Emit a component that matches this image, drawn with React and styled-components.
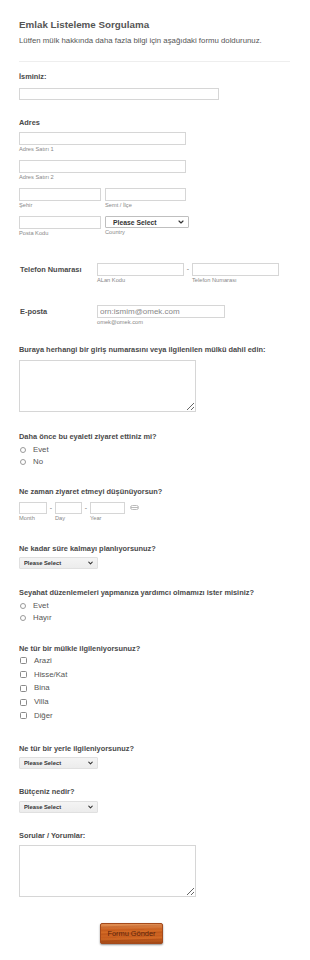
import styled, { createGlobalStyle } from "styled-components";
import { ChevronDown } from "lucide-react";

const GlobalStyle = createGlobalStyle`
    body {
        margin: 0;
        background: #fff;
        font-family: "Liberation Sans", Arial, sans-serif;
    }
`;

const Form = styled.form`
    width: 310px;
    box-sizing: border-box;
    padding: 19px 19px 16px;
    color: #555;
    font-size: 7px;
    line-height: 1;
    display: flex;
    flex-direction: column;
`;

const Title = styled.h1`
    margin: 0;
    font-size: 9.8px;
    line-height: 12px;
    font-weight: bold;
    color: #555;
`;

const Subtitle = styled.p`
    margin: 5px 0 0;
    font-size: 7.8px;
    line-height: 10px;
    color: #555;
`;

const Divider = styled.hr`
    margin: 15px 0 0;
    width: 271px;
    border: 0;
    border-top: 1px solid #eee;
`;

const Field = styled.div`
    margin-top: ${(p) => p.$top}px;
    display: flex;
    flex-direction: column;
    align-items: flex-start;
`;

const Label = styled.label`
    display: block;
    font-size: 7.4px;
    line-height: 10px;
    font-weight: bold;
    color: #4a4a4a;
    margin-bottom: ${(p) => p.$mb ?? 4}px;
    white-space: nowrap;
`;

const TextInput = styled.input`
    display: block;
    box-sizing: border-box;
    width: ${(p) => p.$w}px;
    height: ${(p) => p.$h ?? 13}px;
    margin: 0;
    padding: 0 2px;
    border: 1px solid #d6d6d6;
    background: #fff;
    font-family: "Liberation Sans", Arial, sans-serif;
    font-size: 8px;
    color: #555;

    &::placeholder {
        color: #888;
    }
`;

const SubLabel = styled.span`
    display: block;
    margin-top: 1px;
    font-size: 5.7px;
    line-height: 7px;
    color: #888;
    white-space: nowrap;
`;

const AddressGrid = styled.div`
    display: grid;
    grid-template-columns: 82px 84px;
    column-gap: 4px;
    row-gap: 7px;
`;

const Wide = styled.div`
    grid-column: 1 / span 2;
`;

const InlineField = styled.div`
    margin-top: ${(p) => p.$top}px;
    display: grid;
    grid-template-columns: 78px auto;
    align-items: start;
`;

const InlineLabel = styled.label`
    padding-left: 1px;
    font-size: 7.4px;
    line-height: 13px;
    font-weight: bold;
    color: #4a4a4a;
`;

const PhoneRow = styled.div`
    display: flex;
    align-items: flex-start;
    gap: 2px;
`;

const Dash = styled.span`
    font-size: 7px;
    line-height: 11px;
    color: #777;
    width: 4px;
    text-align: center;
`;

const TextArea = styled.textarea`
    display: block;
    box-sizing: border-box;
    width: 177px;
    height: 52px;
    margin: 0;
    border: 1px solid #d6d6d6;
    resize: both;
`;

const OptionRow = styled.label`
    display: flex;
    align-items: center;
    gap: 7px;
    height: ${(p) => p.$h}px;
    padding-left: 1px;
    font-size: 7.8px;
    color: #555;
`;

const RadioDot = styled.span`
    box-sizing: border-box;
    width: 6px;
    height: 6px;
    border: 1px solid #9a9a9a;
    border-radius: 50%;
    background: #fff;
`;

const CheckBox = styled.span`
    box-sizing: border-box;
    width: 7px;
    height: 7px;
    border: 1px solid #8a8a8a;
    border-radius: 1.5px;
    background: #fff;
`;

const DateRow = styled.div`
    display: flex;
    align-items: flex-start;
    gap: 2px;
`;

const CalendarIcon = styled.span`
    margin: 3px 0 0 3px;
    box-sizing: border-box;
    width: 9px;
    height: 5px;
    border: 1px solid #bbb;
    border-radius: 3px;
    background: linear-gradient(#bbb, #bbb) center / 100% 1px no-repeat;
`;

const SelectWrap = styled.div`
    position: relative;
    width: ${(p) => p.$w}px;
    height: ${(p) => p.$h}px;
`;

const Select = styled.select`
    display: block;
    box-sizing: border-box;
    appearance: none;
    width: 100%;
    height: 100%;
    margin: 0;
    padding: 0 0 0 ${(p) => (p.$plain ? 7 : 4)}px;
    border: 1px solid ${(p) => (p.$plain ? "#bfbfbf" : "#e0e0e0")};
    border-radius: 1px;
    background: ${(p) => (p.$plain ? "#fff" : "linear-gradient(#f4f4f4, #ececec)")};
    font-family: "Liberation Sans", Arial, sans-serif;
    font-size: ${(p) => (p.$plain ? 6.8 : 5.8)}px;
    font-weight: bold;
    color: #333;
`;

const Chevron = styled(ChevronDown)`
    position: absolute;
    right: 4px;
    top: 50%;
    transform: translateY(-50%);
    pointer-events: none;
    color: #333;
`;

const ButtonRow = styled.div`
    margin-top: 26px;
    padding-left: 81px;
`;

const SubmitButton = styled.button`
    display: block;
    width: 63px;
    height: 21px;
    padding: 0;
    border: 1px solid #a44a1c;
    border-radius: 2px;
    font-family: "Liberation Sans", Arial, sans-serif;
    font-size: 7.4px;
    color: #5a240c;
    background:
        linear-gradient(rgba(255, 220, 180, 0.35), rgba(255, 255, 255, 0) 30%, rgba(0, 0, 0, 0) 75%, rgba(90, 30, 5, 0.35)),
        repeating-linear-gradient(178deg, #c9601f 0px, #d66d27 2px, #bd5519 3px, #cf6523 5px, #c45b1d 7px),
        #c9601f;
    box-shadow: 0 1px 2px rgba(0, 0, 0, 0.45);
`;

const Choice = ({ type, label, h }) => (
    <OptionRow $h={h}>
        {type === "radio" ? <RadioDot /> : <CheckBox />}
        {label}
    </OptionRow>
);

const Dropdown = ({ w, h, plain }) => (
    <SelectWrap $w={w} $h={h}>
        <Select $plain={plain} defaultValue="">
            <option value="">Please Select</option>
        </Select>
        <Chevron size={plain ? 8 : 7} strokeWidth={3.5} />
    </SelectWrap>
);

const AddressPart = ({ w, label }) => (
    <div>
        <TextInput $w={w} />
        <SubLabel>{label}</SubLabel>
    </div>
);

const App = () => {
    const properties = ["Arazi", "Hisse/Kat", "Bina", "Villa", "Diğer"];
    return (
        <>
            <GlobalStyle />
            <Form>
                <Title>Emlak Listeleme Sorgulama</Title>
                <Subtitle>Lütfen mülk hakkında daha fazla bilgi için aşağıdaki formu doldurunuz.</Subtitle>
                <Divider />

                <Field $top={10}>
                    <Label $mb={6}>İsminiz:</Label>
                    <TextInput $w={200} $h={12} />
                </Field>

                <Field $top={18}>
                    <Label>Adres</Label>
                    <AddressGrid>
                        <Wide><AddressPart w={167} label="Adres Satırı 1" /></Wide>
                        <Wide><AddressPart w={167} label="Adres Satırı 2" /></Wide>
                        <AddressPart w={82} label="Şehir" />
                        <AddressPart w={81} label="Semt / İlçe" />
                        <AddressPart w={82} label="Posta Kodu" />
                        <div>
                            <Dropdown w={84} h={12} plain />
                            <SubLabel>Country</SubLabel>
                        </div>
                    </AddressGrid>
                </Field>

                <InlineField $top={26}>
                    <InlineLabel>Telefon Numarası</InlineLabel>
                    <PhoneRow>
                        <div>
                            <TextInput $w={87} />
                            <SubLabel>ALan Kodu</SubLabel>
                        </div>
                        <Dash>-</Dash>
                        <div>
                            <TextInput $w={87} />
                            <SubLabel>Telefon Numarası</SubLabel>
                        </div>
                    </PhoneRow>
                </InlineField>

                <InlineField $top={21}>
                    <InlineLabel>E-posta</InlineLabel>
                    <div>
                        <TextInput $w={128} placeholder="orn:ismim@omek.com" />
                        <SubLabel>omek@omek.com</SubLabel>
                    </div>
                </InlineField>

                <Field $top={19}>
                    <Label $mb={5}>Buraya herhangi bir giriş numarasını veya ilgilenilen mülkü dahil edin:</Label>
                    <TextArea />
                </Field>

                <Field $top={20}>
                    <Label $mb={2}>Daha önce bu eyaleti ziyaret ettiniz mi?</Label>
                    <Choice type="radio" label="Evet" h={12} />
                    <Choice type="radio" label="No" h={12} />
                </Field>

                <Field $top={19}>
                    <Label $mb={5}>Ne zaman ziyaret etmeyi düşünüyorsun?</Label>
                    <DateRow>
                        <div>
                            <TextInput $w={28} $h={12} />
                            <SubLabel>Month</SubLabel>
                        </div>
                        <Dash>-</Dash>
                        <div>
                            <TextInput $w={27} $h={12} />
                            <SubLabel>Day</SubLabel>
                        </div>
                        <Dash>-</Dash>
                        <div>
                            <TextInput $w={35} $h={12} />
                            <SubLabel>Year</SubLabel>
                        </div>
                        <CalendarIcon />
                    </DateRow>
                </Field>

                <Field $top={22}>
                    <Label $mb={3}>Ne kadar süre kalmayı planlıyorsunuz?</Label>
                    <Dropdown w={79} h={12} />
                </Field>

                <Field $top={19}>
                    <Label $mb={2}>Seyahat düzenlemeleri yapmanıza yardımcı olmamızı ister misiniz?</Label>
                    <Choice type="radio" label="Evet" h={12} />
                    <Choice type="radio" label="Hayır" h={12} />
                </Field>

                <Field $top={20}>
                    <Label $mb={0}>Ne tür bir mülkle ilgileniyorsunuz?</Label>
                    {properties.map((p) => (
                        <Choice key={p} type="check" label={p} h={13.75} />
                    ))}
                </Field>

                <Field $top={21}>
                    <Label $mb={3}>Ne tür bir yerle ilgileniyorsunuz?</Label>
                    <Dropdown w={79} h={12} />
                </Field>

                <Field $top={18}>
                    <Label>Bütçeniz nedir?</Label>
                    <Dropdown w={79} h={12} />
                </Field>

                <Field $top={18}>
                    <Label>Sorular / Yorumlar:</Label>
                    <TextArea />
                </Field>

                <ButtonRow>
                    <SubmitButton type="button">Formu Gönder</SubmitButton>
                </ButtonRow>
            </Form>
        </>
    );
};

export default App;
